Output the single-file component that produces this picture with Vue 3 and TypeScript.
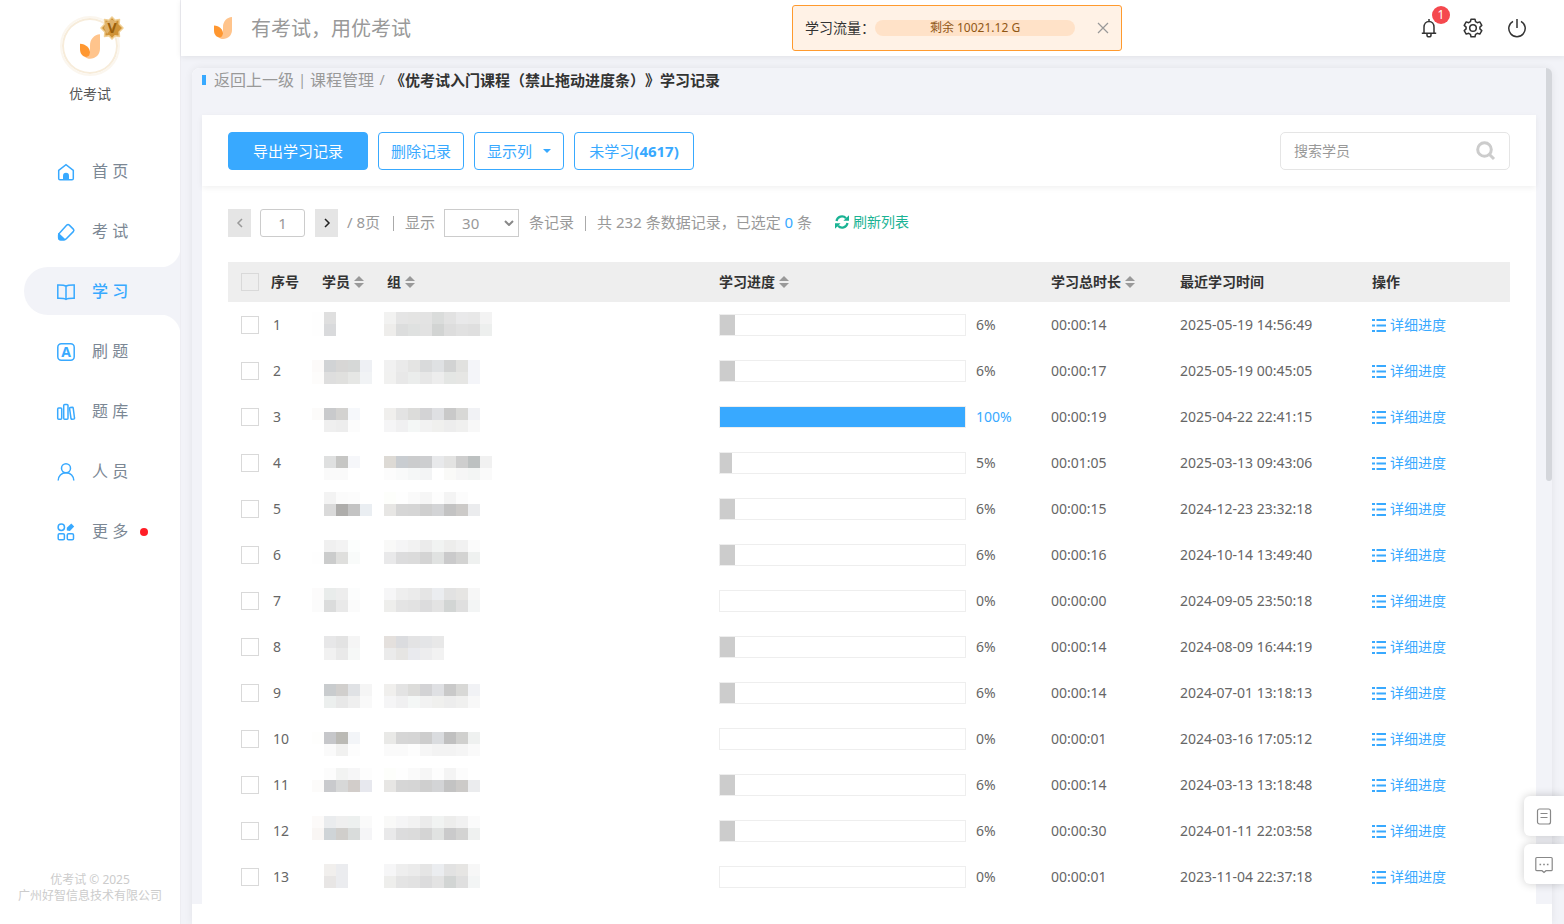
<script setup lang="ts">
import { ref } from 'vue'

interface NavItem {
  key: string
  label: string
  active?: boolean
  dot?: boolean
}

interface Mosaic {
  top: string
  bottom: string
}

interface RecordRow {
  id: number
  offset: number
  student: Mosaic
  group: Mosaic
  percent: number
  duration: string
  latest: string
}

const navItems: NavItem[] = [
  { key: 'home', label: '首 页' },
  { key: 'exam', label: '考 试' },
  { key: 'study', label: '学 习', active: true },
  { key: 'drill', label: '刷 题' },
  { key: 'bank', label: '题 库' },
  { key: 'people', label: '人 员' },
  { key: 'more', label: '更 多', dot: true },
]

const groupA: Mosaic = {
  top: 'f0efed e3e3e3 dcdcda d3d3d5 dfe0e3 c9c9c9 d8d8d6 f1f2f5',
  bottom: 'f5f5f6 f0f0f1 f4f7f6 f2f2f2 f0f0ee ededed f0f0ef f8f8f8',
}
const groupB: Mosaic = {
  top: 'fdfefb fefefe fafafa f6f6f6 fdfdfd f4f4f4 fcfcfc -',
  bottom: 'e7e6e4 d6d6d6 d5d5d5 cfcfcf d3d4d6 c3c3c3 cccac8 ebecee',
}
const groupC: Mosaic = {
  top: 'f9f9f8 f5f5f6 f2f2f2 ebebeb f1f3f2 ededec f1f1f1 fbfbfb',
  bottom: 'e9e9ea dcdcdd dbdbdb d4d4d4 e0e2e1 cacacb d3d3d2 eff1f0',
}
const groupD: Mosaic = {
  top: 'f6f6f7 eeeeee ebebeb e5e5e5 ebedf0 e2e2e2 e6e5e3 f7f7f7',
  bottom: 'eeeeec e4e4e4 e2e2e2 dcdcdd e3e3e3 d2d5d4 dfdfdf f3f5f5',
}

const rows: RecordRow[] = [
  {
    id: 1, offset: 10, percent: 6, duration: '00:00:14', latest: '2025-05-19 14:56:49',
    student: { top: 'fefefe dfdfdf', bottom: 'fefefe d9dadc' },
    group: {
      top: 'f2f2f1 e5e5e5 e4e4e3 e3e3e3 dadcdb e2e2e2 e9e9ea e8e8e8 f3f3f3',
      bottom: 'eeedeb dcdddd dfe1e0 e2e2e2 d2d4d3 dddddd e1e1e1 dfdfdf edefee',
    },
  },
  {
    id: 2, offset: 12, percent: 6, duration: '00:00:17', latest: '2025-05-19 00:45:05',
    student: { top: 'fcfaf9 d1d3d5 d7d6d5 d6d8d7 eef0f4', bottom: 'fdfcfb dedede e0e0de e6e7e5 f1f3f5' },
    group: {
      top: 'f1f1f1 eaeaea e4e4e3 d9dadb dfe1e3 d2d3d3 e1e1df f4f5f9',
      bottom: 'f1f1f0 e8e8e8 ebedec e7e7e7 ededed e4e6e4 e6e6e4 f4f5f9',
    },
  },
  {
    id: 3, offset: 14, percent: 100, duration: '00:00:19', latest: '2025-04-22 22:41:15',
    student: { top: 'fcfbfa c9cacc d3d2d0 f6f8fb', bottom: '- efefef ededed fcfcfc' },
    group: groupA,
  },
  {
    id: 4, offset: 16, percent: 5, duration: '00:01:05', latest: '2025-03-13 09:43:06',
    student: { top: '- dfe0e0 c6c6c4 f6f7fa', bottom: '- fafafa fafafa' },
    group: {
      top: 'dddad5 c9cdd1 cbcccd cdced0 e8e9eb e3e3e2 cecece bdc1c1 f1f1f1',
      bottom: 'fcfcfc f9fafa f5f7f7 f3f4f5 - fafaf8 f6f6f6 f3f5f4 fafafa',
    },
  },
  {
    id: 5, offset: 6, percent: 6, duration: '00:00:15', latest: '2024-12-23 23:32:18',
    student: { top: '- f3f3f3 fbfbfb fcfcfc', bottom: '- dadada aeadab c3c3c3 eaeef2' },
    group: groupB,
  },
  {
    id: 6, offset: 8, percent: 6, duration: '00:00:16', latest: '2024-10-14 13:49:40',
    student: { top: '- f0f0f0 f3f3f3 fcfefd', bottom: 'fefefe cbcccc dfdfdd f9fbfa' },
    group: groupC,
  },
  {
    id: 7, offset: 10, percent: 0, duration: '00:00:00', latest: '2024-09-05 23:50:18',
    student: { top: 'fcfbfb e9eceb ededed fcfdfd', bottom: 'fbfbfb dbdcdc e9e9e9 fbfbfb' },
    group: groupD,
  },
  {
    id: 8, offset: 12, percent: 6, duration: '00:00:14', latest: '2024-08-09 16:44:19',
    student: { top: '- e7e7e8 e3e3e3 f5f5f5', bottom: '- f1f1f1 e9e9e9 f6f8f7' },
    group: {
      top: 'e4e0dd dbdcdf e3e3e4 e4e5e7 e8e8e8',
      bottom: 'ebebeb e6e5e3 e9eaee ededee f2f2f2',
    },
  },
  {
    id: 9, offset: 14, percent: 6, duration: '00:00:14', latest: '2024-07-01 13:18:13',
    student: { top: '- c9ccce d1cfcd e0e2e5 f5f5f5', bottom: '- ecefee e8e8e8 efefef f9f9f9' },
    group: groupA,
  },
  {
    id: 10, offset: 16, percent: 0, duration: '00:00:01', latest: '2024-03-16 17:05:12',
    student: { top: 'fefefd c6c7ca bbbab5 f3f5f8', bottom: '- fafafa f1f1f0 fdfdfd' },
    group: {
      top: 'e9e9e7 d6d6d6 d5d5d5 cdcdcd dadcdf c0c0c0 d0d0ce eff1f0',
      bottom: 'fafafa fafafa fdfdfd f6f6f6 f3f3f3 f3f3f3 f5f5f5 fafafa',
    },
  },
  {
    id: 11, offset: 6, percent: 6, duration: '00:00:14', latest: '2024-03-13 13:18:48',
    student: { top: '- fcfcfc f2f3f2 f6f6f7 fdfdfd', bottom: 'fcfbfa c9cacd d7d8d8 d2cdca e7e8ee' },
    group: groupB,
  },
  {
    id: 12, offset: 8, percent: 6, duration: '00:00:30', latest: '2024-01-11 22:03:58',
    student: { top: 'fcfaf9 eaecee efefef edf0ef fafafa', bottom: 'f9f6f4 cfd4d7 d0cecb d9dcdb f5f5f7' },
    group: groupC,
  },
  {
    id: 13, offset: 10, percent: 0, duration: '00:00:01', latest: '2023-11-04 22:37:18',
    student: { top: '- f1efed ebecef', bottom: '- e8e6e5 ebecef' },
    group: groupD,
  },
]

interface Tile {
  x: number
  y: number
  fill: string
}

const TILE = 12

function tiles(mosaic: Mosaic, offset: number): Tile[] {
  return [mosaic.top, mosaic.bottom].flatMap((line, r) =>
    line
      .split(' ')
      .map((hex, c) => ({ x: c * TILE, y: offset + r * TILE, fill: hex === '-' ? 'none' : '#' + hex })),
  )
}

const page = ref('1')
const pageSize = ref('30')
const keyword = ref('')
const showQuota = ref(true)
</script>

<template>
  <div class="app" lang="zh-CN">
    <aside class="sidebar">
      <div class="profile">
        <div class="avatar">
          <svg class="avatar-logo" viewBox="0 0 18 22" aria-hidden="true">
            <path fill="#ffc48c" d="M18 0C12.800.3 9 4.500 9 10v6.500c0 2-1.800 3.800-4.600 3.700C5.600 21.400 7.200 22 9 22c5 0 9-3.800 9-9z" />
            <path fill="#ff9730" d="M0 8.500c5.200.3 9 3.700 9 8 0 2.400-1.400 3.900-3.500 3.900C2.200 20.400 0 17.200 0 13.500z" />
          </svg>
          <svg class="medal" viewBox="0 0 24 24" aria-hidden="true">
            <path fill="#cf9236" stroke="#f0cf94" stroke-width="1.500" stroke-linejoin="round" d="M12 1l3 3.200 4.500-.7-.4 4.500L23 12l-3.900 4 .4 4.500-4.500-.7L12 23l-3-3.200-4.500.7.4-4.500L1 12l3.900-4-.4-4.500 4.500.7z" />
            <path fill="#e6c083" d="M11 3.500l6 2L7 18l-3-6 2-6z" opacity=".7" />
            <text x="12" y="17" text-anchor="middle" font-size="14" font-weight="700" fill="#9a5f0c">V</text>
          </svg>
        </div>
        <div class="profile-name">优考试</div>
      </div>

      <nav class="nav">
        <a v-for="item in navItems" :key="item.key" href="#" class="nav-item" :class="{ active: item.active }">
          <svg class="nav-icon" viewBox="0 0 20 20" aria-hidden="true">
            <g v-if="item.key === 'home'">
              <path d="M2.700 8.400L10 2.700l7.300 5.700v8.100c0 .8-.5 1.300-1.300 1.300H4c-.8 0-1.300-.5-1.300-1.300z" />
              <path class="solid" d="M7 17.800v-4a3 3 0 0 1 6 0v4z" />
            </g>
            <g v-else-if="item.key === 'exam'">
              <path d="M10.800 3.100c.8-.8 1.700-.8 2.500 0l4 4c.8.8.8 1.700 0 2.500l-7 7.200c-.7.7-1.300 1-2.200 1H5c-1.500 0-2.400-.9-2.400-2.400v-2.200c0-.8.200-1.300.8-1.900z" />
              <path class="solid" d="M2.500 10.700l7.400 7-1.900.8H5c-1.800 0-3-1.200-3-3v-3z" />
            </g>
            <g v-else-if="item.key === 'study'">
              <path d="M10 4.200C8.500 3 6.500 2.800 1.800 2.900v13.300c4.500-.1 6.700.1 8.200 1.200 1.500-1.100 3.700-1.300 8.200-1.200V2.900C13.500 2.800 11.500 3 10 4.200zM10 4.200v13" />
            </g>
            <g v-else-if="item.key === 'drill'">
              <rect x="1.800" y="1.800" width="16.400" height="16.400" rx="3.500" />
              <text class="letter" x="10" y="15" text-anchor="middle" font-size="14" font-weight="700">A</text>
            </g>
            <g v-else-if="item.key === 'bank'">
              <rect x="1.700" y="6" width="4" height="11.300" rx="1" />
              <rect x="7.700" y="2.500" width="4.300" height="14.800" rx="1" />
              <path d="M14.300 5.600l2-.3c.4 0 .8.200.9.700l1.300 10c.1.500-.2.900-.7 1l-1.800.2c-.5.1-.9-.2-1-.7l-1.400-9.900c-.1-.5.200-.9.700-1z" />
            </g>
            <g v-else-if="item.key === 'people'">
              <circle cx="10" cy="6.300" r="4.500" />
              <path d="M2.200 18.500c0-4.500 3.200-7.700 7.800-7.700s7.800 3.200 7.800 7.700" />
            </g>
            <g v-else>
              <circle cx="5.300" cy="5.300" r="3.200" />
              <rect x="2.200" y="11.700" width="6.200" height="6" rx="1.300" />
              <rect x="11.300" y="11.700" width="6.200" height="6" rx="1.300" />
              <path class="solid" d="M10.800 8.600v-2.800l4.500-4.200 2.900 2.900-4.300 4.400z" />
            </g>
          </svg>
          <span>{{ item.label }}</span>
          <i v-if="item.dot" class="nav-dot"></i>
        </a>
      </nav>

      <footer class="copyright">
        <div>优考试 © 2025</div>
        <div>广州好智信息技术有限公司</div>
      </footer>
    </aside>

    <div class="content">
      <header class="topbar">
        <svg class="brand-logo" viewBox="0 0 18 22" aria-hidden="true">
          <path fill="#ffc48c" d="M18 0C12.800.3 9 4.500 9 10v6.500c0 2-1.800 3.800-4.600 3.700C5.600 21.400 7.200 22 9 22c5 0 9-3.800 9-9z" />
          <path fill="#ff9730" d="M0 8.500c5.200.3 9 3.700 9 8 0 2.400-1.400 3.900-3.500 3.900C2.200 20.400 0 17.200 0 13.500z" />
        </svg>
        <span class="slogan">有考试，用优考试</span>

        <div v-if="showQuota" class="quota">
          <span>学习流量：</span>
          <div class="quota-bar">剩余 10021.12 G</div>
          <button class="quota-close" type="button" aria-label="关闭" @click="showQuota = false">
            <svg viewBox="0 0 12 12" aria-hidden="true"><path d="M1 1l10 10M11 1L1 11" /></svg>
          </button>
        </div>

        <div class="top-actions">
          <button type="button" aria-label="消息" class="top-btn">
            <svg viewBox="0 0 20 20" aria-hidden="true">
              <path d="M10 1v2M5 15V9.300C5 5.800 7.200 3.500 10 3.500s5 2.300 5 5.800V15M2.800 15.300h14.400" />
              <path d="M8 16v1.200c0 1 .8 1.600 2 1.600s2-.6 2-1.600V16" />
            </svg>
            <span class="badge">1</span>
          </button>
          <button type="button" aria-label="设置" class="top-btn">
            <svg viewBox="0 0 20 20" aria-hidden="true">
              <path stroke-linejoin="round" d="M8 1.200h4l.6 2.500 1.700 1 2.500-.8 2 3.500-1.900 1.700v1.800l1.900 1.700-2 3.500-2.500-.8-1.700 1-.6 2.500H8l-.6-2.500-1.700-1-2.500.8-2-3.500 1.900-1.700V9.100L1.200 7.400l2-3.500 2.500.8 1.700-1z" />
              <circle cx="10" cy="10" r="3.300" />
            </svg>
          </button>
          <button type="button" aria-label="退出" class="top-btn">
            <svg viewBox="0 0 20 20" aria-hidden="true">
              <path d="M10 1v9M6 3.300a8.200 8.200 0 1 0 8 0" />
            </svg>
          </button>
        </div>
      </header>

      <main class="panel">
        <div class="panel-body">
          <div class="crumbs">
            <i class="crumb-mark"></i>
            <a href="#">返回上一级</a>
            <span class="crumb-sep">|</span>
            <a href="#">课程管理</a>
            <span class="crumb-sep">/</span>
            <h1>《优考试入门课程（禁止拖动进度条）》学习记录</h1>
          </div>

          <section class="card">
            <div class="toolbar">
              <button type="button" class="btn primary">导出学习记录</button>
              <button type="button" class="btn">删除记录</button>
              <button type="button" class="btn">显示列<i class="caret"></i></button>
              <button type="button" class="btn wide">未学习<b>(4617)</b></button>
              <div class="search">
                <input v-model="keyword" type="text" placeholder="搜索学员" aria-label="搜索学员" />
                <button type="button" aria-label="搜索">
                  <svg viewBox="0 0 20 20" aria-hidden="true">
                    <circle cx="8.500" cy="8.500" r="6.800" />
                    <path d="M13.500 13.500l4.500 4.500" />
                  </svg>
                </button>
              </div>
            </div>

            <div class="pager">
              <button type="button" class="step" disabled aria-label="上一页">
                <svg viewBox="0 0 10 12" aria-hidden="true"><path d="M7 2L3 6l4 4" /></svg>
              </button>
              <input v-model="page" class="page-input" type="text" aria-label="页码" />
              <button type="button" class="step next" aria-label="下一页">
                <svg viewBox="0 0 10 12" aria-hidden="true"><path d="M3 2l4 4-4 4" /></svg>
              </button>
              <span class="total">/ 8页</span>
              <i class="rule"></i>
              <label for="size">显示</label>
              <span class="select-wrap">
                <select id="size" v-model="pageSize">
                  <option>10</option>
                  <option>30</option>
                  <option>50</option>
                </select>
                <svg viewBox="0 0 10 6" aria-hidden="true"><path d="M1 1l4 4 4-4" /></svg>
              </span>
              <span>条记录</span>
              <i class="rule"></i>
              <span>共 232 条数据记录，已选定 <em>0</em> 条</span>
              <a href="#" class="refresh">
                <svg viewBox="0 0 14 14" aria-hidden="true">
                  <path class="arc" d="M1.500 6A5.500 5.500 0 0 1 11 3.200M12.500 8A5.500 5.500 0 0 1 3 10.800" />
                  <path class="tip" d="M14 .2v5.600H8.400zM0 13.800V8.200h5.600z" />
                </svg>刷新列表
              </a>
            </div>

            <table class="records">
              <colgroup>
                <col class="c-check" />
                <col class="c-no" />
                <col class="c-student" />
                <col />
                <col class="c-progress" />
                <col class="c-duration" />
                <col class="c-latest" />
                <col class="c-action" />
              </colgroup>
              <thead>
                <tr>
                  <th class="check"><input type="checkbox" aria-label="全选" /></th>
                  <th>序号</th>
                  <th><span class="sortable">学员<i class="sort"></i></span></th>
                  <th><span class="sortable">组<i class="sort"></i></span></th>
                  <th><span class="sortable">学习进度<i class="sort"></i></span></th>
                  <th><span class="sortable">学习总时长<i class="sort"></i></span></th>
                  <th>最近学习时间</th>
                  <th>操作</th>
                </tr>
              </thead>
              <tbody>
                <tr v-for="row in rows" :key="row.id">
                  <td class="check"><input type="checkbox" :aria-label="'选择 ' + row.id" /></td>
                  <td class="no">{{ row.id }}</td>
                  <td>
                    <svg class="mosaic student" viewBox="0 0 60 46" shape-rendering="crispEdges" aria-hidden="true">
                      <rect v-for="(t, i) in tiles(row.student, row.offset)" :key="i" :x="t.x" :y="t.y" width="12" height="12" :fill="t.fill" />
                    </svg>
                  </td>
                  <td>
                    <svg class="mosaic group" viewBox="0 0 108 46" shape-rendering="crispEdges" aria-hidden="true">
                      <rect v-for="(t, i) in tiles(row.group, row.offset)" :key="i" :x="t.x" :y="t.y" width="12" height="12" :fill="t.fill" />
                    </svg>
                  </td>
                  <td>
                    <div class="progress" :class="{ done: row.percent === 100 }">
                      <div class="track"><div class="fill" :style="{ width: row.percent + '%' }"></div></div>
                      <span>{{ row.percent }}%</span>
                    </div>
                  </td>
                  <td>{{ row.duration }}</td>
                  <td>{{ row.latest }}</td>
                  <td>
                    <a href="#" class="detail">
                      <svg viewBox="0 0 14 14" aria-hidden="true">
                        <path d="M0 2h3M4.500 2H14M0 7.500h3M4.500 7.500H14M0 13h3M4.500 13H14" />
                      </svg>详细进度
                    </a>
                  </td>
                </tr>
              </tbody>
            </table>
          </section>
        </div>
        <i class="thumb"></i>
      </main>
    </div>

    <div class="floating">
      <button type="button" aria-label="文档">
        <svg viewBox="0 0 20 20" aria-hidden="true">
          <rect x="3.500" y="3" width="13" height="15" rx="2" />
          <path d="M6.500 7.500h7M6.500 11.500h7" />
        </svg>
      </button>
      <button type="button" aria-label="留言">
        <svg viewBox="0 0 20 20" aria-hidden="true">
          <path d="M2.800 3.500h14.400c.6 0 1 .4 1 1v11.200c0 .6-.4 1-1 1H12l-2 1.800-2-1.800H2.800c-.6 0-1-.4-1-1V4.500c0-.6.400-1 1-1z" />
          <path class="dots" d="M5.500 10.500h1.600M9.200 10.500h1.600M12.900 10.500h1.600" />
        </svg>
      </button>
    </div>
  </div>
</template>

<style>
body {
  margin: 0;
  background: #f2f3f8;
}
</style>

<style scoped>
.app,
.app *,
.app *::before,
.app *::after {
  box-sizing: border-box;
}
.app {
  display: flex;
  min-height: 100vh;
  background: #f2f3f8;
  color: #666;
  font-family: "Noto Sans", "Noto Sans CJK SC", sans-serif;
  font-size: 14px;
  line-height: 20px;
  text-spacing-trim: space-all;
}
button,
input,
select {
  font: inherit;
  margin: 0;
  padding: 0;
}
button {
  border: 0;
  background: none;
  cursor: pointer;
}
a {
  color: inherit;
  text-decoration: none;
}
svg {
  display: block;
  fill: none;
  flex: none;
}

/* sidebar */
.sidebar {
  display: flex;
  flex-direction: column;
  flex: none;
  width: 180px;
  padding: 16px 0 20px;
  background: #fff;
}
.profile {
  display: flex;
  flex-direction: column;
  align-items: center;
  gap: 8px;
}
.avatar {
  position: relative;
  display: flex;
  align-items: center;
  justify-content: center;
  width: 60px;
  height: 60px;
  border: 2px solid #fbf6ee;
  border-radius: 50%;
  box-shadow: inset 0 0 0 2px #f7ecda;
}
.avatar-logo {
  width: 20px;
  height: 25px;
}
.medal {
  position: absolute;
  top: -2px;
  right: -6px;
  width: 24px;
  height: 24px;
}
.profile-name {
  color: #555;
}
.nav {
  display: flex;
  flex-direction: column;
  gap: 12px;
  margin-top: 43px;
}
.nav-item {
  position: relative;
  display: flex;
  align-items: center;
  gap: 16px;
  height: 48px;
  margin-left: 24px;
  padding-left: 32px;
  color: #7b8794;
  font-size: 16px;
}
.nav-item.active {
  border-radius: 24px 0 0 24px;
  background: #f2f3f8;
  color: #38a9ff;
  font-weight: 500;
}
.nav-item.active::before,
.nav-item.active::after {
  content: "";
  position: absolute;
  right: 0;
  width: 20px;
  height: 20px;
}
.nav-item.active::before {
  bottom: 100%;
  background: radial-gradient(circle at 0 0, #fff 20px, #f2f3f8 21px);
}
.nav-item.active::after {
  top: 100%;
  background: radial-gradient(circle at 0 100%, #fff 20px, #f2f3f8 21px);
}
.nav-icon {
  width: 20px;
  height: 20px;
  margin-top: 2px;
  stroke: #38a9ff;
  stroke-width: 1.5;
}
.nav-icon .solid {
  fill: #38a9ff;
  stroke: none;
}
.nav-icon .letter {
  fill: #38a9ff;
  stroke: none;
}
.nav-dot {
  width: 8px;
  height: 8px;
  margin-top: 2px;
  margin-left: -4px;
  border-radius: 50%;
  background: #ff1e26;
}
.copyright {
  margin-top: auto;
  color: #ccc;
  font-size: 12px;
  line-height: 16px;
  text-align: center;
}

/* top bar */
.content {
  display: flex;
  flex: 1;
  flex-direction: column;
  gap: 12px;
  min-width: 0;
  border-left: 1px solid #ededf2;
}
.topbar {
  display: flex;
  align-items: center;
  height: 56px;
  padding: 0 37px 0 33px;
  background: #fff;
  box-shadow: 0 1px 6px rgba(0, 0, 0, 0.08);
}
.brand-logo {
  width: 18px;
  height: 22px;
}
.slogan {
  margin-left: 19px;
  padding-top: 2px;
  color: #999;
  font-size: 20px;
  line-height: 28px;
}
.quota {
  display: flex;
  align-items: center;
  width: 330px;
  height: 46px;
  margin-left: auto;
  margin-right: 297px;
  padding: 0 12px;
  border: 1px solid #ff9a2e;
  border-radius: 3px;
  background: #fff2e6;
  color: #333;
}
.quota-bar {
  width: 200px;
  height: 16px;
  border-radius: 8px;
  background: #ffe2c8;
  color: #8f5715;
  font-size: 12px;
  line-height: 16px;
  text-align: center;
}
.quota-close {
  margin-left: auto;
}
.quota-close svg {
  width: 12px;
  height: 12px;
  stroke: #999;
  stroke-width: 1.2;
}
.top-actions {
  display: flex;
  gap: 24px;
}
.top-btn {
  position: relative;
}
.top-btn svg {
  width: 20px;
  height: 20px;
  stroke: #333;
  stroke-width: 1.5;
}
.badge {
  position: absolute;
  top: -12px;
  left: 13px;
  width: 18px;
  height: 18px;
  border-radius: 9px;
  background: #f5484e;
  color: #fff;
  font-size: 12px;
  line-height: 18px;
}

/* panel */
.panel {
  position: relative;
  flex: 1;
  margin: 0 12px 0 11px;
  padding-bottom: 20px;
  border-radius: 8px 8px 0 0;
  background: #fff;
  box-shadow: 0 0 8px rgba(0, 0, 0, 0.07);
}
.panel-body {
  padding: 0 16px 0 10px;
  border-radius: 8px 8px 0 0;
  background: #f2f3f8;
}
.thumb {
  position: absolute;
  top: 0;
  right: 0;
  width: 6px;
  height: 413px;
  border-radius: 0 6px 3px 3px;
  background: #d4d6db;
}
.crumbs {
  display: flex;
  align-items: center;
  height: 47px;
  padding-bottom: 23px;
  color: #999;
  font-size: 16px;
}
.crumb-mark {
  width: 4px;
  height: 10px;
  margin-right: 8px;
  background: #38a9ff;
}
.crumb-sep {
  width: 16px;
  font-size: 14px;
  text-align: center;
}
.crumbs h1 {
  margin: 0;
  color: #333;
  font-size: 15px;
  font-weight: 700;
}
.card {
  padding-bottom: 4px;
  background: #fff;
}
.toolbar {
  display: flex;
  align-items: center;
  gap: 10px;
  height: 71px;
  padding: 0 26px;
  box-shadow: 0 2px 6px rgba(0, 0, 0, 0.06);
}
.btn {
  display: flex;
  align-items: center;
  justify-content: center;
  height: 38px;
  padding: 0 12px;
  border: 1px solid #38a9ff;
  border-radius: 4px;
  color: #38a9ff;
  font-size: 15px;
  white-space: nowrap;
}
.btn.primary {
  padding: 0 24px;
  background: #38a9ff;
  color: #fff;
}
.btn.wide {
  min-width: 120px;
}
.caret {
  margin-left: 11px;
  border: 4px solid transparent;
  border-top-color: #38a9ff;
  border-bottom: 0;
}
.search {
  display: flex;
  align-items: center;
  width: 230px;
  height: 38px;
  margin-left: auto;
  padding: 0 13px;
  border: 1px solid #e5e5e5;
  border-radius: 5px;
}
.search input {
  flex: 1;
  min-width: 0;
  border: 0;
  outline: 0;
  background: none;
  color: #666;
}
.search input::placeholder {
  color: #999;
}
.search svg {
  width: 20px;
  height: 20px;
  stroke: #ccc;
  stroke-width: 3;
}
.pager {
  display: flex;
  align-items: center;
  padding: 23px 26px 25px;
  color: #999;
  font-size: 15px;
}
.pager > span:not(.select-wrap),
.pager > label,
.refresh {
  padding-bottom: 3px;
}
.step {
  display: flex;
  align-items: center;
  justify-content: center;
  width: 23px;
  height: 28px;
  background: #e5e5e5;
}
.step svg {
  width: 10px;
  height: 12px;
  stroke: #999;
  stroke-width: 1.5;
}
.step.next svg {
  stroke: #222;
}
.page-input {
  width: 45px;
  height: 28px;
  margin: 0 10px 0 9px;
  border: 1px solid #ccc;
  border-radius: 3px;
  background: #fff;
  color: #999;
  text-align: center;
}
.total {
  margin: 0 2px 0 9px;
}
.rule {
  width: 1px;
  height: 15px;
  margin: 0 11px;
  background: #aaa;
}
.select-wrap {
  position: relative;
  margin: 0 10px 0 9px;
}
.select-wrap select {
  display: block;
  width: 75px;
  height: 28px;
  padding-left: 17px;
  border: 1px solid #ccc;
  border-radius: 0;
  appearance: none;
  background: #fff;
  color: #999;
}
.select-wrap svg {
  position: absolute;
  top: 11px;
  right: 5px;
  width: 10px;
  height: 6px;
  stroke: #888;
  stroke-width: 2;
  pointer-events: none;
}
.pager em {
  color: #38a9ff;
  font-style: normal;
}
.refresh {
  display: flex;
  align-items: center;
  gap: 4px;
  margin-left: 23px;
  color: #1ab394;
  font-size: 14px;
}
.refresh svg {
  width: 14px;
  height: 14px;
}
.refresh .arc {
  stroke: #1ab394;
  stroke-width: 2.2;
}
.refresh .tip {
  fill: #1ab394;
}

/* table */
.records {
  width: calc(100% - 52px);
  margin: 0 26px;
  border-collapse: collapse;
  table-layout: fixed;
}
.c-check { width: 43px; }
.c-no { width: 51px; }
.c-student { width: 65px; }
.c-progress { width: 332px; }
.c-duration { width: 129px; }
.c-latest { width: 192px; }
.c-action { width: 138px; }
.records th {
  height: 40px;
  padding: 0;
  background: #eee;
  color: #333;
  font-weight: 700;
  text-align: left;
  white-space: nowrap;
}
.records td {
  height: 46px;
  padding: 0;
}
.records .check {
  padding-left: 13px;
}
.records .no {
  padding-left: 2px;
}
.check input {
  display: block;
  width: 18px;
  height: 18px;
  border: 1px solid #d9d9d9;
  appearance: none;
  background: #fff;
}
th.check input {
  background: transparent;
}
.sortable {
  display: flex;
  align-items: center;
  gap: 4px;
}
.sort {
  display: flex;
  flex-direction: column;
  gap: 2px;
}
.sort::before,
.sort::after {
  content: "";
  border: 5px solid transparent;
}
.sort::before {
  border-top: 0;
  border-bottom-color: #999;
}
.sort::after {
  border-top-color: #999;
  border-bottom: 0;
}
.mosaic {
  height: 46px;
}
.mosaic.student {
  width: 60px;
  margin-left: -10px;
}
.mosaic.group {
  width: 108px;
  margin-left: -3px;
}
.progress {
  display: flex;
  align-items: center;
  gap: 10px;
}
.track {
  width: 247px;
  height: 22px;
  border: 1px solid #eee;
}
.fill {
  height: 100%;
  background: #ccc;
}
.progress.done {
  color: #38a9ff;
}
.progress.done .fill {
  background: #38a9ff;
}
.detail {
  display: flex;
  align-items: center;
  gap: 4px;
  color: #38a9ff;
}
.detail svg {
  width: 14px;
  height: 14px;
  stroke: #38a9ff;
  stroke-width: 2;
}

/* floating tools */
.floating {
  position: fixed;
  right: 0;
  bottom: 40px;
  display: flex;
  flex-direction: column;
  gap: 8px;
}
.floating button {
  display: flex;
  align-items: center;
  justify-content: center;
  width: 40px;
  height: 40px;
  border-radius: 6px 0 0 6px;
  background: #fff;
  box-shadow: 0 0 10px rgba(0, 0, 0, 0.2);
}
.floating svg {
  width: 20px;
  height: 20px;
  stroke: #888;
  stroke-width: 1.2;
}
.floating .dots {
  stroke-width: 1.6;
}
</style>
